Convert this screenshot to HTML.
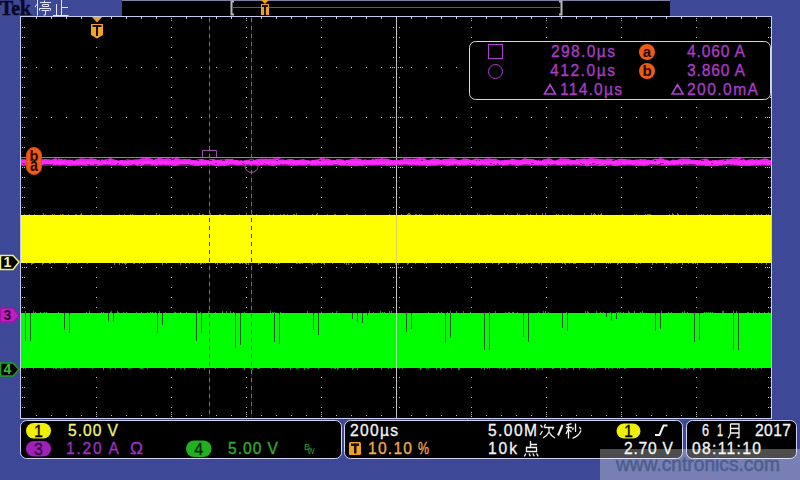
<!DOCTYPE html>
<html><head><meta charset="utf-8"><style>
html,body{margin:0;padding:0;background:#3D4896;width:800px;height:480px;overflow:hidden}
svg{display:block}
</style></head><body>
<svg width="800" height="480" viewBox="0 0 800 480" font-family="Liberation Sans, sans-serif">
<rect x="0" y="0" width="800" height="480" fill="#3D4896"/>
<rect x="122" y="0" width="548" height="1" fill="#7E80A8"/>
<rect x="122" y="1" width="548" height="15" fill="#000"/>
<rect x="233" y="7" width="327" height="1" fill="#8C3C84"/>
<path d="M234 1.5H231.5V14.5H234" fill="none" stroke="#B8B8B8" stroke-width="2"/>
<path d="M559 1.5H561.5V14.5H559" fill="none" stroke="#B8B8B8" stroke-width="2"/>
<path d="M261 0H269L265 4Z" fill="#F0A020"/>
<rect x="261" y="4" width="8" height="11" fill="#F0A020"/>
<rect x="262" y="5" width="6" height="2" fill="#1A1000"/>
<rect x="264" y="5" width="2" height="10" fill="#1A1000"/>
<text x="0" y="14.7" font-family="Liberation Serif" font-weight="bold" font-size="20" fill="#080826" stroke="#080826" stroke-width="0.5" textLength="31" lengthAdjust="spacingAndGlyphs">Tek</text>
<path d="M37.5 0V15.5 M38 3L35 7 M44.5 0.5V2 M40 2.5H51 M42.5 4.5H48.5V6.5H42.5Z M39.5 10.5V8.5H50.5V10.5 M41.5 10.5H49.5 M45.5 10.5V15H43.5 M61.5 0V15 M61.5 7.5H68 M56.5 4V15 M53 15.5H68.5" fill="none" stroke="#E4E6FF" stroke-width="1"/>
<rect x="21" y="17" width="750" height="401" fill="#000"/>
<rect x="20" y="16" width="752" height="1" fill="#C4CCF4"/>
<rect x="20" y="418" width="752" height="1" fill="#C4CCF4"/>
<rect x="20" y="16" width="1" height="403" fill="#C4CCF4"/>
<rect x="771" y="16" width="1" height="403" fill="#C4CCF4"/>
<path d="M36 67h1v1h-1zM51 67h1v1h-1zM66 67h1v1h-1zM81 67h1v1h-1zM96 67h1v1h-1zM111 67h1v1h-1zM126 67h1v1h-1zM141 67h1v1h-1zM156 67h1v1h-1zM171 67h1v1h-1zM186 67h1v1h-1zM201 67h1v1h-1zM216 67h1v1h-1zM231 67h1v1h-1zM246 67h1v1h-1zM261 67h1v1h-1zM276 67h1v1h-1zM291 67h1v1h-1zM306 67h1v1h-1zM321 67h1v1h-1zM336 67h1v1h-1zM351 67h1v1h-1zM366 67h1v1h-1zM381 67h1v1h-1zM396 67h1v1h-1zM411 67h1v1h-1zM426 67h1v1h-1zM441 67h1v1h-1zM456 67h1v1h-1zM471 67h1v1h-1zM486 67h1v1h-1zM501 67h1v1h-1zM516 67h1v1h-1zM531 67h1v1h-1zM546 67h1v1h-1zM561 67h1v1h-1zM576 67h1v1h-1zM591 67h1v1h-1zM606 67h1v1h-1zM621 67h1v1h-1zM636 67h1v1h-1zM651 67h1v1h-1zM666 67h1v1h-1zM681 67h1v1h-1zM696 67h1v1h-1zM711 67h1v1h-1zM726 67h1v1h-1zM741 67h1v1h-1zM756 67h1v1h-1zM36 117h1v1h-1zM51 117h1v1h-1zM66 117h1v1h-1zM81 117h1v1h-1zM96 117h1v1h-1zM111 117h1v1h-1zM126 117h1v1h-1zM141 117h1v1h-1zM156 117h1v1h-1zM171 117h1v1h-1zM186 117h1v1h-1zM201 117h1v1h-1zM216 117h1v1h-1zM231 117h1v1h-1zM246 117h1v1h-1zM261 117h1v1h-1zM276 117h1v1h-1zM291 117h1v1h-1zM306 117h1v1h-1zM321 117h1v1h-1zM336 117h1v1h-1zM351 117h1v1h-1zM366 117h1v1h-1zM381 117h1v1h-1zM396 117h1v1h-1zM411 117h1v1h-1zM426 117h1v1h-1zM441 117h1v1h-1zM456 117h1v1h-1zM471 117h1v1h-1zM486 117h1v1h-1zM501 117h1v1h-1zM516 117h1v1h-1zM531 117h1v1h-1zM546 117h1v1h-1zM561 117h1v1h-1zM576 117h1v1h-1zM591 117h1v1h-1zM606 117h1v1h-1zM621 117h1v1h-1zM636 117h1v1h-1zM651 117h1v1h-1zM666 117h1v1h-1zM681 117h1v1h-1zM696 117h1v1h-1zM711 117h1v1h-1zM726 117h1v1h-1zM741 117h1v1h-1zM756 117h1v1h-1zM36 167h1v1h-1zM51 167h1v1h-1zM66 167h1v1h-1zM81 167h1v1h-1zM96 167h1v1h-1zM111 167h1v1h-1zM126 167h1v1h-1zM141 167h1v1h-1zM156 167h1v1h-1zM171 167h1v1h-1zM186 167h1v1h-1zM201 167h1v1h-1zM216 167h1v1h-1zM231 167h1v1h-1zM246 167h1v1h-1zM261 167h1v1h-1zM276 167h1v1h-1zM291 167h1v1h-1zM306 167h1v1h-1zM321 167h1v1h-1zM336 167h1v1h-1zM351 167h1v1h-1zM366 167h1v1h-1zM381 167h1v1h-1zM396 167h1v1h-1zM411 167h1v1h-1zM426 167h1v1h-1zM441 167h1v1h-1zM456 167h1v1h-1zM471 167h1v1h-1zM486 167h1v1h-1zM501 167h1v1h-1zM516 167h1v1h-1zM531 167h1v1h-1zM546 167h1v1h-1zM561 167h1v1h-1zM576 167h1v1h-1zM591 167h1v1h-1zM606 167h1v1h-1zM621 167h1v1h-1zM636 167h1v1h-1zM651 167h1v1h-1zM666 167h1v1h-1zM681 167h1v1h-1zM696 167h1v1h-1zM711 167h1v1h-1zM726 167h1v1h-1zM741 167h1v1h-1zM756 167h1v1h-1zM36 217h1v1h-1zM51 217h1v1h-1zM66 217h1v1h-1zM81 217h1v1h-1zM96 217h1v1h-1zM111 217h1v1h-1zM126 217h1v1h-1zM141 217h1v1h-1zM156 217h1v1h-1zM171 217h1v1h-1zM186 217h1v1h-1zM201 217h1v1h-1zM216 217h1v1h-1zM231 217h1v1h-1zM246 217h1v1h-1zM261 217h1v1h-1zM276 217h1v1h-1zM291 217h1v1h-1zM306 217h1v1h-1zM321 217h1v1h-1zM336 217h1v1h-1zM351 217h1v1h-1zM366 217h1v1h-1zM381 217h1v1h-1zM396 217h1v1h-1zM411 217h1v1h-1zM426 217h1v1h-1zM441 217h1v1h-1zM456 217h1v1h-1zM471 217h1v1h-1zM486 217h1v1h-1zM501 217h1v1h-1zM516 217h1v1h-1zM531 217h1v1h-1zM546 217h1v1h-1zM561 217h1v1h-1zM576 217h1v1h-1zM591 217h1v1h-1zM606 217h1v1h-1zM621 217h1v1h-1zM636 217h1v1h-1zM651 217h1v1h-1zM666 217h1v1h-1zM681 217h1v1h-1zM696 217h1v1h-1zM711 217h1v1h-1zM726 217h1v1h-1zM741 217h1v1h-1zM756 217h1v1h-1zM36 267h1v1h-1zM51 267h1v1h-1zM66 267h1v1h-1zM81 267h1v1h-1zM96 267h1v1h-1zM111 267h1v1h-1zM126 267h1v1h-1zM141 267h1v1h-1zM156 267h1v1h-1zM171 267h1v1h-1zM186 267h1v1h-1zM201 267h1v1h-1zM216 267h1v1h-1zM231 267h1v1h-1zM246 267h1v1h-1zM261 267h1v1h-1zM276 267h1v1h-1zM291 267h1v1h-1zM306 267h1v1h-1zM321 267h1v1h-1zM336 267h1v1h-1zM351 267h1v1h-1zM366 267h1v1h-1zM381 267h1v1h-1zM396 267h1v1h-1zM411 267h1v1h-1zM426 267h1v1h-1zM441 267h1v1h-1zM456 267h1v1h-1zM471 267h1v1h-1zM486 267h1v1h-1zM501 267h1v1h-1zM516 267h1v1h-1zM531 267h1v1h-1zM546 267h1v1h-1zM561 267h1v1h-1zM576 267h1v1h-1zM591 267h1v1h-1zM606 267h1v1h-1zM621 267h1v1h-1zM636 267h1v1h-1zM651 267h1v1h-1zM666 267h1v1h-1zM681 267h1v1h-1zM696 267h1v1h-1zM711 267h1v1h-1zM726 267h1v1h-1zM741 267h1v1h-1zM756 267h1v1h-1zM36 317h1v1h-1zM51 317h1v1h-1zM66 317h1v1h-1zM81 317h1v1h-1zM96 317h1v1h-1zM111 317h1v1h-1zM126 317h1v1h-1zM141 317h1v1h-1zM156 317h1v1h-1zM171 317h1v1h-1zM186 317h1v1h-1zM201 317h1v1h-1zM216 317h1v1h-1zM231 317h1v1h-1zM246 317h1v1h-1zM261 317h1v1h-1zM276 317h1v1h-1zM291 317h1v1h-1zM306 317h1v1h-1zM321 317h1v1h-1zM336 317h1v1h-1zM351 317h1v1h-1zM366 317h1v1h-1zM381 317h1v1h-1zM396 317h1v1h-1zM411 317h1v1h-1zM426 317h1v1h-1zM441 317h1v1h-1zM456 317h1v1h-1zM471 317h1v1h-1zM486 317h1v1h-1zM501 317h1v1h-1zM516 317h1v1h-1zM531 317h1v1h-1zM546 317h1v1h-1zM561 317h1v1h-1zM576 317h1v1h-1zM591 317h1v1h-1zM606 317h1v1h-1zM621 317h1v1h-1zM636 317h1v1h-1zM651 317h1v1h-1zM666 317h1v1h-1zM681 317h1v1h-1zM696 317h1v1h-1zM711 317h1v1h-1zM726 317h1v1h-1zM741 317h1v1h-1zM756 317h1v1h-1zM36 367h1v1h-1zM51 367h1v1h-1zM66 367h1v1h-1zM81 367h1v1h-1zM96 367h1v1h-1zM111 367h1v1h-1zM126 367h1v1h-1zM141 367h1v1h-1zM156 367h1v1h-1zM171 367h1v1h-1zM186 367h1v1h-1zM201 367h1v1h-1zM216 367h1v1h-1zM231 367h1v1h-1zM246 367h1v1h-1zM261 367h1v1h-1zM276 367h1v1h-1zM291 367h1v1h-1zM306 367h1v1h-1zM321 367h1v1h-1zM336 367h1v1h-1zM351 367h1v1h-1zM366 367h1v1h-1zM381 367h1v1h-1zM396 367h1v1h-1zM411 367h1v1h-1zM426 367h1v1h-1zM441 367h1v1h-1zM456 367h1v1h-1zM471 367h1v1h-1zM486 367h1v1h-1zM501 367h1v1h-1zM516 367h1v1h-1zM531 367h1v1h-1zM546 367h1v1h-1zM561 367h1v1h-1zM576 367h1v1h-1zM591 367h1v1h-1zM606 367h1v1h-1zM621 367h1v1h-1zM636 367h1v1h-1zM651 367h1v1h-1zM666 367h1v1h-1zM681 367h1v1h-1zM696 367h1v1h-1zM711 367h1v1h-1zM726 367h1v1h-1zM741 367h1v1h-1zM756 367h1v1h-1zM96 27h1v1h-1zM96 37h1v1h-1zM96 47h1v1h-1zM96 57h1v1h-1zM96 77h1v1h-1zM96 87h1v1h-1zM96 97h1v1h-1zM96 107h1v1h-1zM96 127h1v1h-1zM96 137h1v1h-1zM96 147h1v1h-1zM96 157h1v1h-1zM96 177h1v1h-1zM96 187h1v1h-1zM96 197h1v1h-1zM96 207h1v1h-1zM96 227h1v1h-1zM96 237h1v1h-1zM96 247h1v1h-1zM96 257h1v1h-1zM96 277h1v1h-1zM96 287h1v1h-1zM96 297h1v1h-1zM96 307h1v1h-1zM96 327h1v1h-1zM96 337h1v1h-1zM96 347h1v1h-1zM96 357h1v1h-1zM96 377h1v1h-1zM96 387h1v1h-1zM96 397h1v1h-1zM96 407h1v1h-1zM171 27h1v1h-1zM171 37h1v1h-1zM171 47h1v1h-1zM171 57h1v1h-1zM171 77h1v1h-1zM171 87h1v1h-1zM171 97h1v1h-1zM171 107h1v1h-1zM171 127h1v1h-1zM171 137h1v1h-1zM171 147h1v1h-1zM171 157h1v1h-1zM171 177h1v1h-1zM171 187h1v1h-1zM171 197h1v1h-1zM171 207h1v1h-1zM171 227h1v1h-1zM171 237h1v1h-1zM171 247h1v1h-1zM171 257h1v1h-1zM171 277h1v1h-1zM171 287h1v1h-1zM171 297h1v1h-1zM171 307h1v1h-1zM171 327h1v1h-1zM171 337h1v1h-1zM171 347h1v1h-1zM171 357h1v1h-1zM171 377h1v1h-1zM171 387h1v1h-1zM171 397h1v1h-1zM171 407h1v1h-1zM246 27h1v1h-1zM246 37h1v1h-1zM246 47h1v1h-1zM246 57h1v1h-1zM246 77h1v1h-1zM246 87h1v1h-1zM246 97h1v1h-1zM246 107h1v1h-1zM246 127h1v1h-1zM246 137h1v1h-1zM246 147h1v1h-1zM246 157h1v1h-1zM246 177h1v1h-1zM246 187h1v1h-1zM246 197h1v1h-1zM246 207h1v1h-1zM246 227h1v1h-1zM246 237h1v1h-1zM246 247h1v1h-1zM246 257h1v1h-1zM246 277h1v1h-1zM246 287h1v1h-1zM246 297h1v1h-1zM246 307h1v1h-1zM246 327h1v1h-1zM246 337h1v1h-1zM246 347h1v1h-1zM246 357h1v1h-1zM246 377h1v1h-1zM246 387h1v1h-1zM246 397h1v1h-1zM246 407h1v1h-1zM321 27h1v1h-1zM321 37h1v1h-1zM321 47h1v1h-1zM321 57h1v1h-1zM321 77h1v1h-1zM321 87h1v1h-1zM321 97h1v1h-1zM321 107h1v1h-1zM321 127h1v1h-1zM321 137h1v1h-1zM321 147h1v1h-1zM321 157h1v1h-1zM321 177h1v1h-1zM321 187h1v1h-1zM321 197h1v1h-1zM321 207h1v1h-1zM321 227h1v1h-1zM321 237h1v1h-1zM321 247h1v1h-1zM321 257h1v1h-1zM321 277h1v1h-1zM321 287h1v1h-1zM321 297h1v1h-1zM321 307h1v1h-1zM321 327h1v1h-1zM321 337h1v1h-1zM321 347h1v1h-1zM321 357h1v1h-1zM321 377h1v1h-1zM321 387h1v1h-1zM321 397h1v1h-1zM321 407h1v1h-1zM396 27h1v1h-1zM396 37h1v1h-1zM396 47h1v1h-1zM396 57h1v1h-1zM396 77h1v1h-1zM396 87h1v1h-1zM396 97h1v1h-1zM396 107h1v1h-1zM396 127h1v1h-1zM396 137h1v1h-1zM396 147h1v1h-1zM396 157h1v1h-1zM396 177h1v1h-1zM396 187h1v1h-1zM396 197h1v1h-1zM396 207h1v1h-1zM396 227h1v1h-1zM396 237h1v1h-1zM396 247h1v1h-1zM396 257h1v1h-1zM396 277h1v1h-1zM396 287h1v1h-1zM396 297h1v1h-1zM396 307h1v1h-1zM396 327h1v1h-1zM396 337h1v1h-1zM396 347h1v1h-1zM396 357h1v1h-1zM396 377h1v1h-1zM396 387h1v1h-1zM396 397h1v1h-1zM396 407h1v1h-1zM471 27h1v1h-1zM471 37h1v1h-1zM471 47h1v1h-1zM471 57h1v1h-1zM471 77h1v1h-1zM471 87h1v1h-1zM471 97h1v1h-1zM471 107h1v1h-1zM471 127h1v1h-1zM471 137h1v1h-1zM471 147h1v1h-1zM471 157h1v1h-1zM471 177h1v1h-1zM471 187h1v1h-1zM471 197h1v1h-1zM471 207h1v1h-1zM471 227h1v1h-1zM471 237h1v1h-1zM471 247h1v1h-1zM471 257h1v1h-1zM471 277h1v1h-1zM471 287h1v1h-1zM471 297h1v1h-1zM471 307h1v1h-1zM471 327h1v1h-1zM471 337h1v1h-1zM471 347h1v1h-1zM471 357h1v1h-1zM471 377h1v1h-1zM471 387h1v1h-1zM471 397h1v1h-1zM471 407h1v1h-1zM546 27h1v1h-1zM546 37h1v1h-1zM546 47h1v1h-1zM546 57h1v1h-1zM546 77h1v1h-1zM546 87h1v1h-1zM546 97h1v1h-1zM546 107h1v1h-1zM546 127h1v1h-1zM546 137h1v1h-1zM546 147h1v1h-1zM546 157h1v1h-1zM546 177h1v1h-1zM546 187h1v1h-1zM546 197h1v1h-1zM546 207h1v1h-1zM546 227h1v1h-1zM546 237h1v1h-1zM546 247h1v1h-1zM546 257h1v1h-1zM546 277h1v1h-1zM546 287h1v1h-1zM546 297h1v1h-1zM546 307h1v1h-1zM546 327h1v1h-1zM546 337h1v1h-1zM546 347h1v1h-1zM546 357h1v1h-1zM546 377h1v1h-1zM546 387h1v1h-1zM546 397h1v1h-1zM546 407h1v1h-1zM621 27h1v1h-1zM621 37h1v1h-1zM621 47h1v1h-1zM621 57h1v1h-1zM621 77h1v1h-1zM621 87h1v1h-1zM621 97h1v1h-1zM621 107h1v1h-1zM621 127h1v1h-1zM621 137h1v1h-1zM621 147h1v1h-1zM621 157h1v1h-1zM621 177h1v1h-1zM621 187h1v1h-1zM621 197h1v1h-1zM621 207h1v1h-1zM621 227h1v1h-1zM621 237h1v1h-1zM621 247h1v1h-1zM621 257h1v1h-1zM621 277h1v1h-1zM621 287h1v1h-1zM621 297h1v1h-1zM621 307h1v1h-1zM621 327h1v1h-1zM621 337h1v1h-1zM621 347h1v1h-1zM621 357h1v1h-1zM621 377h1v1h-1zM621 387h1v1h-1zM621 397h1v1h-1zM621 407h1v1h-1zM696 27h1v1h-1zM696 37h1v1h-1zM696 47h1v1h-1zM696 57h1v1h-1zM696 77h1v1h-1zM696 87h1v1h-1zM696 97h1v1h-1zM696 107h1v1h-1zM696 127h1v1h-1zM696 137h1v1h-1zM696 147h1v1h-1zM696 157h1v1h-1zM696 177h1v1h-1zM696 187h1v1h-1zM696 197h1v1h-1zM696 207h1v1h-1zM696 227h1v1h-1zM696 237h1v1h-1zM696 247h1v1h-1zM696 257h1v1h-1zM696 277h1v1h-1zM696 287h1v1h-1zM696 297h1v1h-1zM696 307h1v1h-1zM696 327h1v1h-1zM696 337h1v1h-1zM696 347h1v1h-1zM696 357h1v1h-1zM696 377h1v1h-1zM696 387h1v1h-1zM696 397h1v1h-1zM696 407h1v1h-1zM36 17h1v1h-1zM36 18h1v1h-1zM36 415h1v1h-1zM51 17h1v1h-1zM51 18h1v1h-1zM51 415h1v1h-1zM66 17h1v1h-1zM66 18h1v1h-1zM66 415h1v1h-1zM81 17h1v1h-1zM81 18h1v1h-1zM81 415h1v1h-1zM96 18h1v1h-1zM96 20h1v1h-1zM96 412h1v1h-1zM96 414h1v1h-1zM96 416h1v1h-1zM111 17h1v1h-1zM111 18h1v1h-1zM111 415h1v1h-1zM126 17h1v1h-1zM126 18h1v1h-1zM126 415h1v1h-1zM141 17h1v1h-1zM141 18h1v1h-1zM141 415h1v1h-1zM156 17h1v1h-1zM156 18h1v1h-1zM156 415h1v1h-1zM171 18h1v1h-1zM171 20h1v1h-1zM171 412h1v1h-1zM171 414h1v1h-1zM171 416h1v1h-1zM186 17h1v1h-1zM186 18h1v1h-1zM186 415h1v1h-1zM201 17h1v1h-1zM201 18h1v1h-1zM201 415h1v1h-1zM216 17h1v1h-1zM216 18h1v1h-1zM216 415h1v1h-1zM231 17h1v1h-1zM231 18h1v1h-1zM231 415h1v1h-1zM246 18h1v1h-1zM246 20h1v1h-1zM246 412h1v1h-1zM246 414h1v1h-1zM246 416h1v1h-1zM261 17h1v1h-1zM261 18h1v1h-1zM261 415h1v1h-1zM276 17h1v1h-1zM276 18h1v1h-1zM276 415h1v1h-1zM291 17h1v1h-1zM291 18h1v1h-1zM291 415h1v1h-1zM306 17h1v1h-1zM306 18h1v1h-1zM306 415h1v1h-1zM321 18h1v1h-1zM321 20h1v1h-1zM321 412h1v1h-1zM321 414h1v1h-1zM321 416h1v1h-1zM336 17h1v1h-1zM336 18h1v1h-1zM336 415h1v1h-1zM351 17h1v1h-1zM351 18h1v1h-1zM351 415h1v1h-1zM366 17h1v1h-1zM366 18h1v1h-1zM366 415h1v1h-1zM381 17h1v1h-1zM381 18h1v1h-1zM381 415h1v1h-1zM396 18h1v1h-1zM396 20h1v1h-1zM396 412h1v1h-1zM396 414h1v1h-1zM396 416h1v1h-1zM411 17h1v1h-1zM411 18h1v1h-1zM411 415h1v1h-1zM426 17h1v1h-1zM426 18h1v1h-1zM426 415h1v1h-1zM441 17h1v1h-1zM441 18h1v1h-1zM441 415h1v1h-1zM456 17h1v1h-1zM456 18h1v1h-1zM456 415h1v1h-1zM471 18h1v1h-1zM471 20h1v1h-1zM471 412h1v1h-1zM471 414h1v1h-1zM471 416h1v1h-1zM486 17h1v1h-1zM486 18h1v1h-1zM486 415h1v1h-1zM501 17h1v1h-1zM501 18h1v1h-1zM501 415h1v1h-1zM516 17h1v1h-1zM516 18h1v1h-1zM516 415h1v1h-1zM531 17h1v1h-1zM531 18h1v1h-1zM531 415h1v1h-1zM546 18h1v1h-1zM546 20h1v1h-1zM546 412h1v1h-1zM546 414h1v1h-1zM546 416h1v1h-1zM561 17h1v1h-1zM561 18h1v1h-1zM561 415h1v1h-1zM576 17h1v1h-1zM576 18h1v1h-1zM576 415h1v1h-1zM591 17h1v1h-1zM591 18h1v1h-1zM591 415h1v1h-1zM606 17h1v1h-1zM606 18h1v1h-1zM606 415h1v1h-1zM621 18h1v1h-1zM621 20h1v1h-1zM621 412h1v1h-1zM621 414h1v1h-1zM621 416h1v1h-1zM636 17h1v1h-1zM636 18h1v1h-1zM636 415h1v1h-1zM651 17h1v1h-1zM651 18h1v1h-1zM651 415h1v1h-1zM666 17h1v1h-1zM666 18h1v1h-1zM666 415h1v1h-1zM681 17h1v1h-1zM681 18h1v1h-1zM681 415h1v1h-1zM696 18h1v1h-1zM696 20h1v1h-1zM696 412h1v1h-1zM696 414h1v1h-1zM696 416h1v1h-1zM711 17h1v1h-1zM711 18h1v1h-1zM711 415h1v1h-1zM726 17h1v1h-1zM726 18h1v1h-1zM726 415h1v1h-1zM741 17h1v1h-1zM741 18h1v1h-1zM741 415h1v1h-1zM756 17h1v1h-1zM756 18h1v1h-1zM756 415h1v1h-1zM22 27h1v1h-1zM24 27h1v1h-1zM768 27h1v1h-1zM770 27h1v1h-1zM22 37h1v1h-1zM24 37h1v1h-1zM768 37h1v1h-1zM770 37h1v1h-1zM22 47h1v1h-1zM24 47h1v1h-1zM768 47h1v1h-1zM770 47h1v1h-1zM22 57h1v1h-1zM24 57h1v1h-1zM768 57h1v1h-1zM770 57h1v1h-1zM22 67h1v1h-1zM24 67h1v1h-1zM26 67h1v1h-1zM765 67h1v1h-1zM767 67h1v1h-1zM769 67h1v1h-1zM22 77h1v1h-1zM24 77h1v1h-1zM768 77h1v1h-1zM770 77h1v1h-1zM22 87h1v1h-1zM24 87h1v1h-1zM768 87h1v1h-1zM770 87h1v1h-1zM22 97h1v1h-1zM24 97h1v1h-1zM768 97h1v1h-1zM770 97h1v1h-1zM22 107h1v1h-1zM24 107h1v1h-1zM768 107h1v1h-1zM770 107h1v1h-1zM22 117h1v1h-1zM24 117h1v1h-1zM26 117h1v1h-1zM765 117h1v1h-1zM767 117h1v1h-1zM769 117h1v1h-1zM22 127h1v1h-1zM24 127h1v1h-1zM768 127h1v1h-1zM770 127h1v1h-1zM22 137h1v1h-1zM24 137h1v1h-1zM768 137h1v1h-1zM770 137h1v1h-1zM22 147h1v1h-1zM24 147h1v1h-1zM768 147h1v1h-1zM770 147h1v1h-1zM22 157h1v1h-1zM24 157h1v1h-1zM768 157h1v1h-1zM770 157h1v1h-1zM22 167h1v1h-1zM24 167h1v1h-1zM26 167h1v1h-1zM765 167h1v1h-1zM767 167h1v1h-1zM769 167h1v1h-1zM22 177h1v1h-1zM24 177h1v1h-1zM768 177h1v1h-1zM770 177h1v1h-1zM22 187h1v1h-1zM24 187h1v1h-1zM768 187h1v1h-1zM770 187h1v1h-1zM22 197h1v1h-1zM24 197h1v1h-1zM768 197h1v1h-1zM770 197h1v1h-1zM22 207h1v1h-1zM24 207h1v1h-1zM768 207h1v1h-1zM770 207h1v1h-1zM22 217h1v1h-1zM24 217h1v1h-1zM26 217h1v1h-1zM765 217h1v1h-1zM767 217h1v1h-1zM769 217h1v1h-1zM22 227h1v1h-1zM24 227h1v1h-1zM768 227h1v1h-1zM770 227h1v1h-1zM22 237h1v1h-1zM24 237h1v1h-1zM768 237h1v1h-1zM770 237h1v1h-1zM22 247h1v1h-1zM24 247h1v1h-1zM768 247h1v1h-1zM770 247h1v1h-1zM22 257h1v1h-1zM24 257h1v1h-1zM768 257h1v1h-1zM770 257h1v1h-1zM22 267h1v1h-1zM24 267h1v1h-1zM26 267h1v1h-1zM765 267h1v1h-1zM767 267h1v1h-1zM769 267h1v1h-1zM22 277h1v1h-1zM24 277h1v1h-1zM768 277h1v1h-1zM770 277h1v1h-1zM22 287h1v1h-1zM24 287h1v1h-1zM768 287h1v1h-1zM770 287h1v1h-1zM22 297h1v1h-1zM24 297h1v1h-1zM768 297h1v1h-1zM770 297h1v1h-1zM22 307h1v1h-1zM24 307h1v1h-1zM768 307h1v1h-1zM770 307h1v1h-1zM22 317h1v1h-1zM24 317h1v1h-1zM26 317h1v1h-1zM765 317h1v1h-1zM767 317h1v1h-1zM769 317h1v1h-1zM22 327h1v1h-1zM24 327h1v1h-1zM768 327h1v1h-1zM770 327h1v1h-1zM22 337h1v1h-1zM24 337h1v1h-1zM768 337h1v1h-1zM770 337h1v1h-1zM22 347h1v1h-1zM24 347h1v1h-1zM768 347h1v1h-1zM770 347h1v1h-1zM22 357h1v1h-1zM24 357h1v1h-1zM768 357h1v1h-1zM770 357h1v1h-1zM22 367h1v1h-1zM24 367h1v1h-1zM26 367h1v1h-1zM765 367h1v1h-1zM767 367h1v1h-1zM769 367h1v1h-1zM22 377h1v1h-1zM24 377h1v1h-1zM768 377h1v1h-1zM770 377h1v1h-1zM22 387h1v1h-1zM24 387h1v1h-1zM768 387h1v1h-1zM770 387h1v1h-1zM22 397h1v1h-1zM24 397h1v1h-1zM768 397h1v1h-1zM770 397h1v1h-1zM22 407h1v1h-1zM24 407h1v1h-1zM768 407h1v1h-1zM770 407h1v1h-1zM393 27h1v1h-1zM399 27h1v1h-1zM393 37h1v1h-1zM399 37h1v1h-1zM393 47h1v1h-1zM399 47h1v1h-1zM393 57h1v1h-1zM399 57h1v1h-1zM390 67h1v1h-1zM392 67h1v1h-1zM394 67h1v1h-1zM398 67h1v1h-1zM400 67h1v1h-1zM402 67h1v1h-1zM393 77h1v1h-1zM399 77h1v1h-1zM393 87h1v1h-1zM399 87h1v1h-1zM393 97h1v1h-1zM399 97h1v1h-1zM393 107h1v1h-1zM399 107h1v1h-1zM390 117h1v1h-1zM392 117h1v1h-1zM394 117h1v1h-1zM398 117h1v1h-1zM400 117h1v1h-1zM402 117h1v1h-1zM393 127h1v1h-1zM399 127h1v1h-1zM393 137h1v1h-1zM399 137h1v1h-1zM393 147h1v1h-1zM399 147h1v1h-1zM393 157h1v1h-1zM399 157h1v1h-1zM390 167h1v1h-1zM392 167h1v1h-1zM394 167h1v1h-1zM398 167h1v1h-1zM400 167h1v1h-1zM402 167h1v1h-1zM393 177h1v1h-1zM399 177h1v1h-1zM393 187h1v1h-1zM399 187h1v1h-1zM393 197h1v1h-1zM399 197h1v1h-1zM393 207h1v1h-1zM399 207h1v1h-1zM390 217h1v1h-1zM392 217h1v1h-1zM394 217h1v1h-1zM398 217h1v1h-1zM400 217h1v1h-1zM402 217h1v1h-1zM393 227h1v1h-1zM399 227h1v1h-1zM393 237h1v1h-1zM399 237h1v1h-1zM393 247h1v1h-1zM399 247h1v1h-1zM393 257h1v1h-1zM399 257h1v1h-1zM390 267h1v1h-1zM392 267h1v1h-1zM394 267h1v1h-1zM398 267h1v1h-1zM400 267h1v1h-1zM402 267h1v1h-1zM393 277h1v1h-1zM399 277h1v1h-1zM393 287h1v1h-1zM399 287h1v1h-1zM393 297h1v1h-1zM399 297h1v1h-1zM393 307h1v1h-1zM399 307h1v1h-1zM390 317h1v1h-1zM392 317h1v1h-1zM394 317h1v1h-1zM398 317h1v1h-1zM400 317h1v1h-1zM402 317h1v1h-1zM393 327h1v1h-1zM399 327h1v1h-1zM393 337h1v1h-1zM399 337h1v1h-1zM393 347h1v1h-1zM399 347h1v1h-1zM393 357h1v1h-1zM399 357h1v1h-1zM390 367h1v1h-1zM392 367h1v1h-1zM394 367h1v1h-1zM398 367h1v1h-1zM400 367h1v1h-1zM402 367h1v1h-1zM393 377h1v1h-1zM399 377h1v1h-1zM393 387h1v1h-1zM399 387h1v1h-1zM393 397h1v1h-1zM399 397h1v1h-1zM393 407h1v1h-1zM399 407h1v1h-1z" fill="#C8C8C8"/>
<rect x="396" y="17" width="1" height="401" fill="#C0C0C0"/>
<rect x="21" y="215" width="750" height="48" fill="#FFFF00"/>
<rect x="21" y="215" width="750" height="1" fill="#F4F070"/>
<rect x="21" y="313" width="750" height="55" fill="#00FF00"/>
<path d="M24 214h1v1h-1zM26 263h1v1h-1zM29 214h1v1h-1zM31 263h1v2h-1zM32 263h1v1h-1zM33 263h1v1h-1zM34 214h1v1h-1zM42 263h1v2h-1zM43 213h1v2h-1zM43 263h1v1h-1zM45 214h1v1h-1zM49 263h1v1h-1zM50 263h1v1h-1zM52 214h1v1h-1zM54 214h1v1h-1zM54 263h1v1h-1zM60 214h1v1h-1zM62 214h1v1h-1zM63 214h1v1h-1zM67 263h1v2h-1zM68 214h1v1h-1zM68 263h1v1h-1zM70 263h1v1h-1zM75 214h1v1h-1zM76 214h1v1h-1zM77 263h1v1h-1zM80 214h1v1h-1zM81 213h1v2h-1zM87 263h1v1h-1zM91 214h1v1h-1zM101 214h1v1h-1zM114 263h1v2h-1zM119 214h1v1h-1zM119 263h1v2h-1zM122 263h1v1h-1zM124 214h1v1h-1zM124 263h1v1h-1zM125 263h1v2h-1zM126 263h1v1h-1zM130 214h1v1h-1zM132 214h1v1h-1zM133 263h1v1h-1zM134 263h1v1h-1zM139 263h1v1h-1zM143 263h1v1h-1zM144 214h1v1h-1zM145 263h1v1h-1zM156 213h1v2h-1zM159 214h1v1h-1zM162 263h1v2h-1zM166 263h1v1h-1zM172 214h1v1h-1zM175 214h1v1h-1zM180 263h1v2h-1zM182 214h1v1h-1zM185 263h1v1h-1zM188 213h1v2h-1zM189 263h1v1h-1zM192 214h1v1h-1zM194 263h1v1h-1zM197 263h1v1h-1zM199 213h1v2h-1zM200 263h1v2h-1zM201 263h1v1h-1zM202 214h1v1h-1zM203 214h1v1h-1zM203 263h1v1h-1zM205 263h1v1h-1zM209 214h1v1h-1zM210 213h1v2h-1zM215 263h1v1h-1zM217 263h1v2h-1zM219 214h1v1h-1zM220 214h1v1h-1zM220 263h1v1h-1zM224 214h1v1h-1zM225 214h1v1h-1zM225 263h1v2h-1zM227 263h1v1h-1zM229 263h1v1h-1zM233 263h1v1h-1zM239 214h1v1h-1zM239 263h1v1h-1zM240 263h1v1h-1zM242 263h1v1h-1zM245 263h1v1h-1zM246 213h1v2h-1zM246 263h1v2h-1zM248 263h1v2h-1zM252 214h1v1h-1zM256 214h1v1h-1zM258 263h1v2h-1zM259 263h1v1h-1zM260 263h1v1h-1zM268 263h1v1h-1zM269 214h1v1h-1zM270 263h1v1h-1zM273 214h1v1h-1zM273 263h1v1h-1zM275 263h1v1h-1zM276 263h1v1h-1zM277 263h1v1h-1zM279 263h1v1h-1zM280 214h1v1h-1zM283 214h1v1h-1zM284 214h1v1h-1zM287 214h1v1h-1zM293 214h1v1h-1zM294 214h1v1h-1zM296 213h1v2h-1zM296 263h1v1h-1zM297 263h1v1h-1zM299 263h1v1h-1zM300 263h1v1h-1zM302 263h1v1h-1zM311 263h1v1h-1zM312 214h1v1h-1zM312 263h1v2h-1zM314 263h1v1h-1zM316 214h1v1h-1zM316 263h1v1h-1zM317 213h1v2h-1zM321 263h1v1h-1zM323 263h1v1h-1zM324 263h1v2h-1zM327 214h1v1h-1zM332 263h1v1h-1zM334 214h1v1h-1zM335 214h1v1h-1zM344 263h1v1h-1zM346 214h1v1h-1zM346 263h1v2h-1zM347 214h1v1h-1zM348 263h1v2h-1zM352 263h1v1h-1zM355 263h1v1h-1zM364 263h1v1h-1zM365 214h1v1h-1zM369 263h1v1h-1zM377 263h1v1h-1zM378 263h1v2h-1zM381 263h1v1h-1zM389 214h1v1h-1zM395 263h1v2h-1zM396 214h1v1h-1zM396 263h1v1h-1zM398 263h1v2h-1zM401 214h1v1h-1zM407 214h1v1h-1zM407 263h1v2h-1zM408 213h1v2h-1zM408 263h1v1h-1zM409 213h1v2h-1zM410 214h1v1h-1zM415 214h1v1h-1zM415 263h1v1h-1zM416 214h1v1h-1zM419 214h1v1h-1zM421 214h1v1h-1zM424 263h1v1h-1zM426 263h1v1h-1zM434 214h1v1h-1zM436 214h1v1h-1zM437 214h1v1h-1zM440 214h1v1h-1zM441 263h1v1h-1zM443 214h1v1h-1zM445 263h1v1h-1zM448 214h1v1h-1zM450 263h1v1h-1zM454 263h1v1h-1zM455 214h1v1h-1zM460 213h1v2h-1zM465 263h1v1h-1zM467 214h1v1h-1zM469 263h1v1h-1zM471 263h1v1h-1zM473 263h1v1h-1zM477 213h1v2h-1zM479 214h1v1h-1zM479 263h1v1h-1zM485 263h1v1h-1zM487 214h1v1h-1zM490 214h1v1h-1zM491 214h1v1h-1zM492 263h1v1h-1zM498 263h1v2h-1zM499 263h1v1h-1zM504 213h1v2h-1zM507 214h1v1h-1zM507 263h1v1h-1zM508 263h1v1h-1zM516 263h1v2h-1zM517 213h1v2h-1zM517 263h1v1h-1zM519 214h1v1h-1zM519 263h1v1h-1zM521 263h1v1h-1zM522 263h1v1h-1zM525 263h1v1h-1zM526 214h1v1h-1zM527 214h1v1h-1zM527 263h1v1h-1zM530 214h1v1h-1zM531 263h1v1h-1zM533 263h1v1h-1zM536 213h1v2h-1zM538 263h1v1h-1zM539 263h1v1h-1zM541 263h1v2h-1zM542 213h1v2h-1zM545 213h1v2h-1zM550 263h1v1h-1zM554 263h1v1h-1zM556 214h1v1h-1zM558 214h1v1h-1zM562 214h1v1h-1zM562 263h1v1h-1zM564 263h1v1h-1zM565 263h1v2h-1zM568 214h1v1h-1zM569 263h1v1h-1zM571 214h1v1h-1zM573 263h1v1h-1zM574 263h1v1h-1zM575 263h1v1h-1zM584 213h1v2h-1zM584 263h1v1h-1zM591 213h1v2h-1zM593 214h1v1h-1zM594 213h1v2h-1zM594 263h1v2h-1zM595 214h1v1h-1zM598 214h1v1h-1zM600 214h1v1h-1zM601 213h1v2h-1zM606 263h1v1h-1zM608 263h1v1h-1zM610 263h1v1h-1zM617 263h1v2h-1zM618 263h1v1h-1zM620 263h1v1h-1zM622 214h1v1h-1zM627 263h1v1h-1zM634 214h1v1h-1zM635 263h1v1h-1zM636 214h1v1h-1zM636 263h1v1h-1zM637 263h1v1h-1zM640 263h1v1h-1zM645 214h1v1h-1zM647 214h1v1h-1zM648 214h1v1h-1zM649 214h1v1h-1zM650 214h1v1h-1zM652 263h1v2h-1zM656 263h1v1h-1zM664 263h1v2h-1zM669 214h1v1h-1zM670 263h1v1h-1zM671 263h1v1h-1zM672 213h1v2h-1zM673 214h1v1h-1zM673 263h1v1h-1zM676 263h1v1h-1zM677 213h1v2h-1zM677 263h1v1h-1zM678 214h1v1h-1zM682 263h1v2h-1zM686 214h1v1h-1zM688 263h1v1h-1zM692 263h1v1h-1zM693 263h1v1h-1zM695 263h1v1h-1zM697 263h1v2h-1zM699 214h1v1h-1zM701 214h1v1h-1zM703 214h1v1h-1zM704 263h1v1h-1zM707 214h1v1h-1zM710 214h1v1h-1zM717 263h1v1h-1zM722 263h1v1h-1zM723 214h1v1h-1zM724 263h1v1h-1zM725 214h1v1h-1zM727 214h1v1h-1zM734 214h1v1h-1zM738 263h1v1h-1zM746 214h1v1h-1zM753 214h1v1h-1zM755 214h1v1h-1zM758 214h1v1h-1zM758 263h1v1h-1zM761 214h1v1h-1zM761 263h1v1h-1zM766 214h1v1h-1zM766 263h1v2h-1zM768 214h1v1h-1z" fill="#F0F000" opacity="0.5"/>
<path d="M23 368h1v1h-1zM25 311h1v2h-1zM25 368h1v1h-1zM33 311h1v2h-1zM33 368h1v1h-1zM35 312h1v1h-1zM40 312h1v1h-1zM44 312h1v1h-1zM44 368h1v2h-1zM46 312h1v1h-1zM53 368h1v1h-1zM55 368h1v1h-1zM56 368h1v1h-1zM58 312h1v1h-1zM60 368h1v1h-1zM62 368h1v1h-1zM66 368h1v1h-1zM70 368h1v1h-1zM78 368h1v1h-1zM86 312h1v1h-1zM89 311h1v2h-1zM92 368h1v1h-1zM101 312h1v1h-1zM103 312h1v1h-1zM103 368h1v2h-1zM110 312h1v1h-1zM110 368h1v1h-1zM111 311h1v2h-1zM115 368h1v1h-1zM117 311h1v2h-1zM118 312h1v1h-1zM121 368h1v1h-1zM123 312h1v1h-1zM126 312h1v1h-1zM128 368h1v1h-1zM130 368h1v1h-1zM136 312h1v1h-1zM140 368h1v1h-1zM141 312h1v1h-1zM141 368h1v1h-1zM142 368h1v1h-1zM147 312h1v1h-1zM147 368h1v1h-1zM150 312h1v1h-1zM152 312h1v1h-1zM155 312h1v1h-1zM159 311h1v2h-1zM165 312h1v1h-1zM167 368h1v1h-1zM174 312h1v1h-1zM175 312h1v1h-1zM175 368h1v2h-1zM180 312h1v1h-1zM180 368h1v1h-1zM184 368h1v2h-1zM186 312h1v1h-1zM197 311h1v2h-1zM197 368h1v1h-1zM199 368h1v1h-1zM200 312h1v1h-1zM204 368h1v2h-1zM208 311h1v2h-1zM215 312h1v1h-1zM215 368h1v1h-1zM222 311h1v2h-1zM225 368h1v1h-1zM226 311h1v2h-1zM227 368h1v1h-1zM230 311h1v2h-1zM233 312h1v1h-1zM244 312h1v1h-1zM244 368h1v2h-1zM250 368h1v1h-1zM252 368h1v2h-1zM257 368h1v1h-1zM258 368h1v1h-1zM259 368h1v1h-1zM270 311h1v2h-1zM271 368h1v1h-1zM272 312h1v1h-1zM274 312h1v1h-1zM279 368h1v1h-1zM280 312h1v1h-1zM281 368h1v1h-1zM284 368h1v1h-1zM290 368h1v2h-1zM296 368h1v1h-1zM298 368h1v1h-1zM304 368h1v2h-1zM307 311h1v2h-1zM307 368h1v1h-1zM308 368h1v1h-1zM318 368h1v1h-1zM321 312h1v1h-1zM331 368h1v1h-1zM332 312h1v1h-1zM334 368h1v1h-1zM335 368h1v1h-1zM336 311h1v2h-1zM337 368h1v2h-1zM338 368h1v1h-1zM345 368h1v1h-1zM352 368h1v2h-1zM353 368h1v1h-1zM357 368h1v2h-1zM369 311h1v2h-1zM373 312h1v1h-1zM373 368h1v1h-1zM380 311h1v2h-1zM381 368h1v2h-1zM382 312h1v1h-1zM384 312h1v1h-1zM388 368h1v1h-1zM389 311h1v2h-1zM391 311h1v2h-1zM391 368h1v1h-1zM399 368h1v1h-1zM402 368h1v1h-1zM420 368h1v2h-1zM421 368h1v1h-1zM426 368h1v1h-1zM428 312h1v1h-1zM428 368h1v1h-1zM436 368h1v2h-1zM438 312h1v1h-1zM440 368h1v2h-1zM441 312h1v1h-1zM441 368h1v1h-1zM445 368h1v1h-1zM447 312h1v1h-1zM450 311h1v2h-1zM451 368h1v1h-1zM456 311h1v2h-1zM458 368h1v2h-1zM459 368h1v2h-1zM463 311h1v2h-1zM470 312h1v1h-1zM481 368h1v1h-1zM484 368h1v2h-1zM487 368h1v1h-1zM489 312h1v1h-1zM489 368h1v1h-1zM495 311h1v2h-1zM499 368h1v1h-1zM502 368h1v1h-1zM505 312h1v1h-1zM506 368h1v2h-1zM507 368h1v1h-1zM508 312h1v1h-1zM509 312h1v1h-1zM510 368h1v1h-1zM512 312h1v1h-1zM513 312h1v1h-1zM517 312h1v1h-1zM520 368h1v2h-1zM525 368h1v2h-1zM528 368h1v1h-1zM536 368h1v2h-1zM538 312h1v1h-1zM538 368h1v1h-1zM542 368h1v2h-1zM543 311h1v2h-1zM545 311h1v2h-1zM548 312h1v1h-1zM552 368h1v1h-1zM553 368h1v1h-1zM560 368h1v2h-1zM566 312h1v1h-1zM566 368h1v1h-1zM567 368h1v1h-1zM573 368h1v2h-1zM579 368h1v2h-1zM585 311h1v2h-1zM587 311h1v2h-1zM587 368h1v1h-1zM588 312h1v1h-1zM590 368h1v1h-1zM592 368h1v1h-1zM595 368h1v1h-1zM596 311h1v2h-1zM600 312h1v1h-1zM603 312h1v1h-1zM605 368h1v2h-1zM608 368h1v1h-1zM610 312h1v1h-1zM612 368h1v1h-1zM616 312h1v1h-1zM617 368h1v1h-1zM618 312h1v1h-1zM619 368h1v1h-1zM620 312h1v1h-1zM623 312h1v1h-1zM624 368h1v1h-1zM625 368h1v1h-1zM628 311h1v2h-1zM629 312h1v1h-1zM634 311h1v2h-1zM640 312h1v1h-1zM642 311h1v2h-1zM647 368h1v1h-1zM653 368h1v2h-1zM661 311h1v2h-1zM661 368h1v2h-1zM668 312h1v1h-1zM671 312h1v1h-1zM680 368h1v1h-1zM681 368h1v1h-1zM682 312h1v1h-1zM682 368h1v1h-1zM683 368h1v1h-1zM684 311h1v2h-1zM686 368h1v1h-1zM687 312h1v1h-1zM687 368h1v1h-1zM689 368h1v1h-1zM693 368h1v2h-1zM694 368h1v1h-1zM700 368h1v2h-1zM704 312h1v1h-1zM706 312h1v1h-1zM708 312h1v1h-1zM710 312h1v1h-1zM712 312h1v1h-1zM715 368h1v2h-1zM722 311h1v2h-1zM723 311h1v2h-1zM732 368h1v1h-1zM733 311h1v2h-1zM736 311h1v2h-1zM738 368h1v1h-1zM739 368h1v1h-1zM746 368h1v1h-1zM747 312h1v1h-1zM748 312h1v1h-1zM751 368h1v2h-1zM753 311h1v2h-1zM754 368h1v1h-1zM755 312h1v1h-1zM756 368h1v1h-1zM759 312h1v1h-1zM761 368h1v1h-1zM764 312h1v1h-1zM768 312h1v1h-1z" fill="#10E010" opacity="0.7"/>
<rect x="396" y="215" width="1" height="48" fill="#D8D060"/>
<rect x="396" y="313" width="1" height="55" fill="#A0F0A0"/>
<path d="M25 313V341M30 313V341M64 313V330M69 313V333M108 313V322M113 313V322M157 313V333M162 313V325M196 313V341M201 313V333M235 313V348M240 313V345M274 313V342M279 313V344M313 313V330M318 313V335M352 313V319M357 313V322M362 313V323M367 313V316M406 313V332M411 313V329M445 313V343M450 313V338M484 313V350M489 313V350M523 313V337M528 313V342M562 313V328M567 313V331M606 313V317M611 313V321M616 313V319M655 313V331M660 313V329M694 313V342M699 313V340M733 313V350M738 313V350" stroke="#1E5A1E" stroke-width="1" transform="translate(0.5 0)"/>
<rect x="21" y="157" width="750" height="1" fill="#9C7C9C"/>
<path d="M209.5 17V215M251.5 17V215" stroke="#2C102C" stroke-width="1"/>
<path d="M209.5 18V22M209.5 26V30M209.5 34V38M209.5 42V46M209.5 50V54M209.5 58V62M209.5 66V70M209.5 74V78M209.5 82V86M209.5 90V94M209.5 98V102M209.5 106V110M209.5 114V118M209.5 122V126M209.5 130V134M209.5 138V142M209.5 146V150M209.5 154V158M209.5 162V166M209.5 170V174M209.5 178V182M209.5 186V190M209.5 194V198M209.5 202V206M209.5 210V214M251.5 18V22M251.5 26V30M251.5 34V38M251.5 42V46M251.5 50V54M251.5 58V62M251.5 66V70M251.5 74V78M251.5 82V86M251.5 90V94M251.5 98V102M251.5 106V110M251.5 114V118M251.5 122V126M251.5 130V134M251.5 138V142M251.5 146V150M251.5 154V158M251.5 162V166M251.5 170V174M251.5 178V182M251.5 186V190M251.5 194V198M251.5 202V206M251.5 210V214" stroke="#9A5AA4" stroke-width="1"/>
<path d="M209.5 263V313M251.5 263V313" stroke="#2C102C" stroke-width="1"/>
<path d="M209.5 266V270M209.5 274V278M209.5 282V286M209.5 290V294M209.5 298V302M209.5 306V310M251.5 266V270M251.5 274V278M251.5 282V286M251.5 290V294M251.5 298V302M251.5 306V310" stroke="#9A5AA4" stroke-width="1"/>
<path d="M209.5 368V418M251.5 368V418" stroke="#2C102C" stroke-width="1"/>
<path d="M209.5 370V374M209.5 378V382M209.5 386V390M209.5 394V398M209.5 402V406M209.5 410V414M251.5 370V374M251.5 378V382M251.5 386V390M251.5 394V398M251.5 402V406M251.5 410V414" stroke="#9A5AA4" stroke-width="1"/>
<path d="M209.5 218V222M209.5 226V230M209.5 234V238M209.5 242V246M209.5 250V254M209.5 258V262M251.5 218V222M251.5 226V230M251.5 234V238M251.5 242V246M251.5 250V254M251.5 258V262" stroke="#4A3A18" stroke-width="1"/>
<path d="M209.5 314V318M209.5 322V326M209.5 330V334M209.5 338V342M209.5 346V350M209.5 354V358M209.5 362V366M251.5 314V318M251.5 322V326M251.5 330V334M251.5 338V342M251.5 346V350M251.5 354V358M251.5 362V366" stroke="#245A24" stroke-width="1"/>
<path d="M202.5 157V150.5H216.5V157" fill="none" stroke="#A050A8" stroke-width="1"/>
<circle cx="251.5" cy="166" r="6.5" fill="none" stroke="#A050A8" stroke-width="1"/>
<path d="M21 159.0 L22 158.8 L23 159.3 L24 158.9 L25 159.3 L26 159.2 L27 159.0 L28 159.4 L29 159.2 L30 159.7 L31 159.6 L32 159.8 L33 160.1 L34 160.3 L35 159.6 L36 159.4 L37 159.5 L38 159.6 L39 159.2 L40 159.0 L41 159.5 L42 158.8 L43 159.5 L44 159.0 L45 158.9 L46 158.9 L47 159.1 L48 159.6 L49 159.1 L50 159.4 L51 159.5 L52 159.2 L53 159.2 L54 158.6 L55 158.4 L56 158.3 L57 158.7 L58 158.5 L59 158.5 L60 158.9 L61 159.0 L62 159.0 L63 159.5 L64 159.4 L65 159.1 L66 159.4 L67 159.4 L68 159.8 L69 159.7 L70 159.3 L71 160.0 L72 159.4 L73 159.7 L74 160.0 L75 159.6 L76 159.7 L77 159.1 L78 159.2 L79 158.9 L80 158.5 L81 158.6 L82 158.2 L83 158.6 L84 158.6 L85 158.7 L86 158.7 L87 159.0 L88 159.1 L89 158.6 L90 158.7 L91 158.1 L92 158.5 L93 158.4 L94 158.8 L95 159.0 L96 158.9 L97 159.4 L98 159.9 L99 159.5 L100 159.8 L101 159.6 L102 159.4 L103 159.3 L104 159.9 L105 159.3 L106 159.3 L107 159.2 L108 159.2 L109 158.2 L110 158.2 L111 158.2 L112 158.6 L113 159.0 L114 159.5 L115 159.6 L116 160.1 L117 160.1 L118 160.6 L119 160.6 L120 160.0 L121 160.0 L122 160.0 L123 160.0 L124 160.2 L125 160.1 L126 159.7 L127 159.3 L128 159.5 L129 159.4 L130 159.6 L131 159.9 L132 159.6 L133 159.5 L134 159.6 L135 159.6 L136 159.0 L137 159.5 L138 159.2 L139 159.0 L140 158.8 L141 158.4 L142 158.3 L143 158.1 L144 158.4 L145 157.9 L146 157.8 L147 157.9 L148 157.9 L149 158.3 L150 158.3 L151 158.6 L152 158.9 L153 158.9 L154 159.1 L155 158.6 L156 159.0 L157 158.6 L158 158.0 L159 158.0 L160 158.1 L161 158.2 L162 158.1 L163 158.7 L164 158.9 L165 158.5 L166 158.5 L167 158.2 L168 158.3 L169 158.5 L170 158.4 L171 158.9 L172 158.3 L173 158.1 L174 158.8 L175 158.3 L176 157.9 L177 158.2 L178 157.9 L179 158.4 L180 159.0 L181 159.2 L182 159.2 L183 158.9 L184 159.0 L185 158.8 L186 159.3 L187 159.1 L188 159.3 L189 158.9 L190 158.9 L191 159.5 L192 159.9 L193 160.0 L194 160.1 L195 160.2 L196 160.1 L197 159.6 L198 159.6 L199 159.3 L200 158.9 L201 158.9 L202 159.1 L203 159.1 L204 159.5 L205 159.8 L206 159.4 L207 159.9 L208 159.9 L209 159.8 L210 159.2 L211 159.1 L212 159.0 L213 159.0 L214 159.0 L215 159.4 L216 159.7 L217 159.7 L218 159.5 L219 159.7 L220 159.8 L221 159.1 L222 159.5 L223 159.5 L224 159.4 L225 159.3 L226 159.1 L227 158.8 L228 159.1 L229 158.7 L230 159.0 L231 159.1 L232 158.7 L233 159.0 L234 159.9 L235 160.1 L236 159.9 L237 160.0 L238 160.0 L239 160.6 L240 160.5 L241 160.0 L242 160.6 L243 160.7 L244 160.4 L245 160.1 L246 160.2 L247 159.7 L248 159.6 L249 160.3 L250 160.0 L251 159.9 L252 160.1 L253 159.7 L254 160.0 L255 159.9 L256 159.4 L257 159.2 L258 159.1 L259 158.8 L260 158.9 L261 158.6 L262 158.7 L263 158.5 L264 159.0 L265 158.5 L266 158.6 L267 158.7 L268 158.9 L269 158.6 L270 159.0 L271 158.7 L272 158.8 L273 158.8 L274 158.3 L275 158.6 L276 158.2 L277 158.0 L278 158.5 L279 158.0 L280 158.3 L281 158.8 L282 159.1 L283 159.3 L284 159.7 L285 159.8 L286 160.0 L287 159.3 L288 159.4 L289 159.0 L290 158.9 L291 159.2 L292 159.1 L293 159.3 L294 159.7 L295 160.0 L296 159.9 L297 160.1 L298 159.9 L299 159.7 L300 159.6 L301 159.2 L302 159.0 L303 158.9 L304 159.4 L305 159.4 L306 159.9 L307 160.2 L308 159.9 L309 160.3 L310 160.5 L311 160.4 L312 159.8 L313 159.7 L314 159.9 L315 159.6 L316 159.6 L317 159.2 L318 159.2 L319 158.8 L320 158.5 L321 157.8 L322 158.3 L323 158.3 L324 158.0 L325 158.8 L326 158.9 L327 158.3 L328 159.0 L329 158.9 L330 159.3 L331 160.1 L332 160.3 L333 159.8 L334 160.0 L335 159.9 L336 159.5 L337 159.1 L338 159.1 L339 159.3 L340 158.8 L341 159.5 L342 159.6 L343 159.6 L344 160.0 L345 160.4 L346 160.2 L347 159.6 L348 160.0 L349 159.5 L350 159.4 L351 158.7 L352 158.7 L353 158.4 L354 158.8 L355 158.3 L356 158.0 L357 158.2 L358 158.7 L359 158.8 L360 158.7 L361 158.9 L362 159.7 L363 159.5 L364 159.7 L365 159.2 L366 159.3 L367 159.9 L368 159.7 L369 159.5 L370 160.1 L371 159.6 L372 159.5 L373 158.6 L374 159.1 L375 158.3 L376 159.0 L377 158.6 L378 158.4 L379 158.4 L380 158.7 L381 158.1 L382 158.0 L383 158.4 L384 158.4 L385 158.4 L386 158.5 L387 158.5 L388 158.7 L389 159.0 L390 159.4 L391 160.1 L392 160.0 L393 160.2 L394 159.9 L395 160.0 L396 159.6 L397 159.7 L398 159.4 L399 160.0 L400 159.7 L401 159.2 L402 159.0 L403 159.1 L404 158.1 L405 158.6 L406 158.3 L407 158.4 L408 158.8 L409 158.5 L410 158.6 L411 158.8 L412 159.0 L413 158.4 L414 158.7 L415 158.6 L416 158.5 L417 158.2 L418 158.2 L419 157.9 L420 158.0 L421 157.9 L422 158.4 L423 158.0 L424 158.1 L425 158.3 L426 159.3 L427 159.7 L428 159.9 L429 159.7 L430 159.6 L431 159.3 L432 159.1 L433 158.6 L434 158.5 L435 158.3 L436 158.9 L437 159.1 L438 158.9 L439 158.9 L440 159.6 L441 159.2 L442 159.2 L443 158.9 L444 159.1 L445 159.1 L446 159.1 L447 158.8 L448 159.1 L449 158.5 L450 158.6 L451 158.3 L452 158.5 L453 158.2 L454 158.2 L455 158.7 L456 158.9 L457 159.5 L458 159.7 L459 159.9 L460 159.7 L461 159.6 L462 159.4 L463 158.6 L464 158.3 L465 158.8 L466 158.2 L467 158.8 L468 159.1 L469 158.9 L470 159.7 L471 159.8 L472 159.5 L473 159.4 L474 159.2 L475 158.4 L476 158.5 L477 158.4 L478 158.7 L479 158.8 L480 159.0 L481 158.9 L482 159.3 L483 159.2 L484 159.1 L485 158.7 L486 158.4 L487 158.4 L488 158.5 L489 158.3 L490 158.8 L491 158.6 L492 158.7 L493 158.8 L494 158.8 L495 158.7 L496 158.4 L497 159.3 L498 159.7 L499 159.9 L500 160.2 L501 160.4 L502 159.9 L503 160.3 L504 159.9 L505 159.6 L506 159.7 L507 160.1 L508 159.6 L509 159.8 L510 159.7 L511 159.0 L512 158.7 L513 158.8 L514 159.0 L515 159.3 L516 159.5 L517 159.8 L518 159.6 L519 159.8 L520 159.8 L521 159.9 L522 159.1 L523 159.0 L524 158.3 L525 158.2 L526 158.4 L527 158.8 L528 158.9 L529 159.0 L530 158.8 L531 159.0 L532 159.0 L533 159.2 L534 159.2 L535 160.0 L536 159.7 L537 160.4 L538 160.3 L539 159.5 L540 159.7 L541 159.9 L542 159.9 L543 159.5 L544 159.2 L545 159.0 L546 159.3 L547 158.4 L548 158.5 L549 158.0 L550 158.5 L551 159.2 L552 159.0 L553 160.0 L554 160.2 L555 160.6 L556 160.3 L557 159.6 L558 159.7 L559 159.0 L560 158.3 L561 158.2 L562 158.6 L563 158.6 L564 158.5 L565 158.4 L566 158.5 L567 158.5 L568 159.0 L569 158.6 L570 159.4 L571 159.8 L572 159.4 L573 160.1 L574 159.9 L575 159.9 L576 159.1 L577 159.0 L578 158.8 L579 159.2 L580 158.9 L581 158.7 L582 158.7 L583 158.6 L584 158.4 L585 158.4 L586 159.0 L587 158.5 L588 158.9 L589 158.2 L590 158.1 L591 158.3 L592 158.0 L593 158.2 L594 158.6 L595 158.6 L596 158.5 L597 158.4 L598 158.7 L599 158.9 L600 158.9 L601 159.3 L602 158.9 L603 159.6 L604 159.3 L605 159.4 L606 159.1 L607 158.7 L608 158.3 L609 159.0 L610 158.4 L611 158.8 L612 158.9 L613 159.1 L614 159.6 L615 159.8 L616 159.2 L617 159.4 L618 159.0 L619 159.1 L620 158.9 L621 158.7 L622 158.7 L623 158.7 L624 159.3 L625 159.0 L626 158.9 L627 159.4 L628 159.6 L629 159.3 L630 159.4 L631 159.7 L632 159.8 L633 160.1 L634 159.8 L635 159.7 L636 159.5 L637 159.5 L638 159.5 L639 159.4 L640 159.1 L641 159.1 L642 159.3 L643 159.2 L644 159.2 L645 159.0 L646 159.2 L647 159.9 L648 159.4 L649 159.8 L650 160.1 L651 160.3 L652 159.7 L653 159.4 L654 159.1 L655 158.8 L656 158.6 L657 158.9 L658 158.8 L659 158.8 L660 158.1 L661 158.1 L662 158.6 L663 158.8 L664 158.5 L665 158.9 L666 158.9 L667 159.6 L668 160.3 L669 160.4 L670 160.4 L671 160.4 L672 159.8 L673 159.6 L674 159.6 L675 159.9 L676 160.0 L677 159.9 L678 159.5 L679 159.1 L680 158.9 L681 158.6 L682 158.7 L683 158.2 L684 158.8 L685 158.3 L686 158.9 L687 158.6 L688 158.4 L689 158.5 L690 158.9 L691 159.5 L692 159.8 L693 159.4 L694 159.4 L695 159.9 L696 160.0 L697 160.0 L698 159.9 L699 160.2 L700 159.7 L701 159.6 L702 159.3 L703 159.3 L704 158.8 L705 158.8 L706 158.6 L707 158.7 L708 159.2 L709 160.1 L710 160.2 L711 160.0 L712 159.8 L713 160.2 L714 160.3 L715 160.0 L716 159.9 L717 160.2 L718 160.3 L719 159.7 L720 159.4 L721 159.5 L722 159.4 L723 159.6 L724 159.2 L725 159.6 L726 159.4 L727 159.1 L728 158.8 L729 159.4 L730 158.8 L731 159.1 L732 158.5 L733 158.3 L734 158.6 L735 158.2 L736 158.7 L737 158.3 L738 158.0 L739 158.0 L740 158.1 L741 158.3 L742 158.7 L743 158.4 L744 159.1 L745 159.5 L746 160.5 L747 159.9 L748 159.8 L749 159.5 L750 159.3 L751 159.3 L752 159.0 L753 158.8 L754 159.1 L755 159.2 L756 159.0 L757 159.1 L758 159.9 L759 159.8 L760 159.2 L761 159.5 L762 159.1 L763 158.8 L764 158.6 L765 158.4 L766 158.4 L767 158.8 L768 159.2 L769 160.0 L770 159.5 L771 160.3 L771 165.0 L770 165.7 L769 165.3 L768 165.2 L767 165.4 L766 165.2 L765 165.0 L764 164.9 L763 165.1 L762 164.5 L761 165.3 L760 165.2 L759 165.3 L758 165.4 L757 165.2 L756 165.5 L755 165.2 L754 165.6 L753 165.4 L752 165.5 L751 165.6 L750 165.9 L749 166.1 L748 165.8 L747 166.0 L746 165.8 L745 165.9 L744 165.5 L743 166.0 L742 166.0 L741 166.0 L740 165.8 L739 165.7 L738 165.4 L737 165.5 L736 164.8 L735 165.2 L734 165.3 L733 164.6 L732 164.7 L731 164.9 L730 164.4 L729 164.3 L728 164.2 L727 164.4 L726 164.8 L725 165.2 L724 164.6 L723 164.8 L722 165.4 L721 165.6 L720 165.1 L719 165.7 L718 165.9 L717 166.1 L716 165.6 L715 166.3 L714 166.4 L713 166.0 L712 166.2 L711 166.2 L710 166.0 L709 166.1 L708 165.9 L707 165.9 L706 165.9 L705 166.1 L704 165.4 L703 165.5 L702 165.5 L701 165.3 L700 165.4 L699 165.3 L698 165.6 L697 165.0 L696 165.2 L695 164.4 L694 164.6 L693 164.4 L692 164.5 L691 164.8 L690 164.8 L689 164.6 L688 164.4 L687 164.9 L686 164.3 L685 164.6 L684 164.6 L683 164.8 L682 165.0 L681 165.0 L680 164.6 L679 164.7 L678 164.8 L677 165.2 L676 164.7 L675 165.0 L674 165.4 L673 165.2 L672 164.8 L671 164.9 L670 165.1 L669 165.5 L668 165.4 L667 165.5 L666 165.3 L665 165.7 L664 165.5 L663 165.2 L662 165.3 L661 165.6 L660 164.8 L659 165.2 L658 164.8 L657 165.1 L656 164.6 L655 165.1 L654 164.6 L653 164.6 L652 164.8 L651 164.6 L650 164.6 L649 165.0 L648 165.1 L647 165.5 L646 165.4 L645 165.9 L644 166.3 L643 166.2 L642 165.6 L641 165.9 L640 165.4 L639 166.1 L638 165.7 L637 165.6 L636 165.9 L635 165.7 L634 165.1 L633 165.5 L632 165.1 L631 164.8 L630 164.9 L629 164.8 L628 164.8 L627 164.7 L626 165.1 L625 165.2 L624 165.3 L623 165.0 L622 164.8 L621 165.4 L620 165.3 L619 165.6 L618 165.9 L617 166.1 L616 166.3 L615 166.1 L614 166.0 L613 165.8 L612 165.4 L611 164.8 L610 164.8 L609 165.0 L608 164.9 L607 164.9 L606 165.6 L605 165.7 L604 165.7 L603 166.0 L602 165.7 L601 166.0 L600 166.0 L599 165.7 L598 165.7 L597 165.6 L596 165.2 L595 164.9 L594 165.2 L593 165.2 L592 165.3 L591 165.8 L590 165.6 L589 165.9 L588 166.2 L587 166.2 L586 166.3 L585 165.6 L584 165.2 L583 165.8 L582 165.0 L581 165.4 L580 165.6 L579 165.0 L578 165.0 L577 164.8 L576 165.0 L575 164.8 L574 164.7 L573 164.7 L572 164.7 L571 165.2 L570 165.0 L569 164.7 L568 164.6 L567 164.6 L566 165.2 L565 164.9 L564 164.7 L563 165.1 L562 165.4 L561 165.2 L560 165.0 L559 165.4 L558 165.2 L557 165.3 L556 164.6 L555 164.6 L554 164.5 L553 164.7 L552 164.8 L551 165.0 L550 165.0 L549 165.1 L548 165.1 L547 165.8 L546 165.4 L545 165.5 L544 165.8 L543 165.1 L542 165.0 L541 164.8 L540 165.4 L539 164.7 L538 165.4 L537 164.9 L536 164.9 L535 164.9 L534 165.1 L533 165.2 L532 165.1 L531 165.2 L530 164.5 L529 164.9 L528 164.4 L527 164.6 L526 164.7 L525 164.3 L524 164.4 L523 165.1 L522 164.8 L521 165.5 L520 165.3 L519 165.6 L518 165.4 L517 165.8 L516 165.5 L515 165.3 L514 164.7 L513 165.3 L512 165.0 L511 164.5 L510 164.4 L509 164.6 L508 165.3 L507 164.8 L506 165.6 L505 165.1 L504 165.4 L503 165.5 L502 165.1 L501 165.3 L500 164.9 L499 164.7 L498 164.3 L497 164.8 L496 165.0 L495 164.9 L494 165.5 L493 165.2 L492 165.4 L491 165.9 L490 165.6 L489 165.5 L488 165.2 L487 165.4 L486 165.2 L485 165.0 L484 165.4 L483 164.8 L482 164.8 L481 165.0 L480 165.3 L479 165.4 L478 165.3 L477 165.4 L476 165.5 L475 164.8 L474 164.8 L473 164.8 L472 164.7 L471 165.3 L470 165.2 L469 165.1 L468 164.5 L467 165.3 L466 165.3 L465 165.4 L464 165.1 L463 165.4 L462 165.0 L461 165.5 L460 165.5 L459 165.4 L458 165.4 L457 164.8 L456 164.8 L455 164.9 L454 165.1 L453 165.6 L452 165.1 L451 165.2 L450 165.4 L449 166.1 L448 165.5 L447 165.9 L446 165.3 L445 165.2 L444 165.1 L443 165.0 L442 164.6 L441 164.8 L440 164.7 L439 165.0 L438 164.8 L437 165.4 L436 165.3 L435 165.4 L434 165.4 L433 165.7 L432 165.2 L431 165.4 L430 165.9 L429 165.6 L428 166.0 L427 166.2 L426 166.0 L425 165.5 L424 165.4 L423 165.1 L422 165.7 L421 165.1 L420 165.7 L419 165.4 L418 165.1 L417 165.2 L416 165.4 L415 165.1 L414 165.1 L413 164.9 L412 165.2 L411 165.3 L410 165.2 L409 165.2 L408 164.8 L407 164.5 L406 164.7 L405 164.6 L404 164.6 L403 164.8 L402 165.0 L401 164.7 L400 164.9 L399 165.0 L398 164.3 L397 165.0 L396 165.3 L395 165.5 L394 165.0 L393 165.4 L392 165.4 L391 165.3 L390 165.8 L389 165.7 L388 165.6 L387 165.7 L386 165.4 L385 165.3 L384 165.9 L383 165.5 L382 165.0 L381 165.5 L380 164.8 L379 164.9 L378 165.0 L377 165.1 L376 164.7 L375 165.4 L374 164.9 L373 165.3 L372 165.4 L371 165.0 L370 165.2 L369 165.0 L368 165.3 L367 165.5 L366 165.1 L365 165.3 L364 165.5 L363 165.8 L362 166.0 L361 165.9 L360 165.5 L359 165.7 L358 165.8 L357 166.4 L356 165.8 L355 166.0 L354 166.2 L353 165.8 L352 166.1 L351 166.1 L350 165.8 L349 165.9 L348 165.7 L347 165.8 L346 165.4 L345 165.4 L344 165.8 L343 165.4 L342 165.3 L341 165.8 L340 165.2 L339 164.9 L338 164.9 L337 164.3 L336 164.2 L335 164.2 L334 164.5 L333 164.9 L332 165.0 L331 165.4 L330 165.2 L329 164.9 L328 165.4 L327 164.8 L326 165.4 L325 164.9 L324 165.2 L323 165.5 L322 165.2 L321 165.3 L320 165.7 L319 165.1 L318 165.6 L317 165.3 L316 165.5 L315 165.8 L314 165.1 L313 165.7 L312 165.4 L311 165.3 L310 165.5 L309 165.1 L308 165.3 L307 165.2 L306 164.9 L305 165.4 L304 164.9 L303 165.5 L302 165.3 L301 165.5 L300 164.9 L299 165.0 L298 165.0 L297 165.4 L296 165.7 L295 165.6 L294 165.6 L293 166.1 L292 165.6 L291 165.1 L290 165.4 L289 164.8 L288 165.1 L287 164.5 L286 165.0 L285 164.6 L284 164.4 L283 165.0 L282 164.8 L281 164.3 L280 164.9 L279 165.0 L278 164.8 L277 165.4 L276 165.0 L275 165.7 L274 165.7 L273 166.0 L272 165.9 L271 165.2 L270 165.6 L269 165.0 L268 164.9 L267 164.4 L266 164.8 L265 165.0 L264 165.1 L263 164.7 L262 165.3 L261 165.0 L260 165.5 L259 165.4 L258 165.1 L257 165.3 L256 165.0 L255 164.9 L254 165.1 L253 164.8 L252 165.0 L251 165.2 L250 165.2 L249 164.7 L248 164.8 L247 164.9 L246 164.3 L245 164.7 L244 164.7 L243 164.9 L242 164.8 L241 165.1 L240 165.0 L239 165.0 L238 165.3 L237 165.2 L236 165.2 L235 164.7 L234 165.1 L233 164.4 L232 164.9 L231 164.7 L230 164.4 L229 165.2 L228 165.4 L227 165.3 L226 165.5 L225 165.9 L224 166.0 L223 165.9 L222 165.8 L221 165.8 L220 166.3 L219 166.3 L218 166.0 L217 165.9 L216 166.2 L215 165.5 L214 165.8 L213 165.3 L212 165.2 L211 164.6 L210 165.0 L209 164.3 L208 164.8 L207 165.3 L206 165.4 L205 164.9 L204 165.0 L203 165.7 L202 165.6 L201 165.4 L200 165.3 L199 166.1 L198 165.9 L197 165.8 L196 165.7 L195 165.9 L194 165.6 L193 165.5 L192 164.8 L191 165.2 L190 164.8 L189 164.6 L188 164.2 L187 164.3 L186 164.5 L185 164.9 L184 164.5 L183 164.8 L182 164.5 L181 164.9 L180 164.4 L179 164.8 L178 165.5 L177 165.4 L176 165.7 L175 166.2 L174 166.1 L173 165.6 L172 165.5 L171 165.5 L170 165.1 L169 165.5 L168 165.0 L167 165.0 L166 165.1 L165 165.3 L164 164.8 L163 164.7 L162 165.2 L161 165.1 L160 165.0 L159 164.8 L158 164.9 L157 165.4 L156 165.7 L155 165.3 L154 165.4 L153 165.3 L152 165.6 L151 165.1 L150 164.6 L149 164.6 L148 164.8 L147 164.7 L146 164.5 L145 164.6 L144 164.8 L143 165.2 L142 165.4 L141 165.8 L140 165.9 L139 165.4 L138 165.9 L137 165.6 L136 164.9 L135 164.8 L134 164.9 L133 164.5 L132 165.0 L131 164.9 L130 165.5 L129 165.2 L128 165.4 L127 165.7 L126 165.6 L125 166.2 L124 166.0 L123 165.7 L122 165.2 L121 164.7 L120 165.2 L119 164.9 L118 165.0 L117 164.6 L116 164.9 L115 165.4 L114 165.0 L113 165.0 L112 165.3 L111 165.5 L110 164.8 L109 164.8 L108 164.7 L107 164.6 L106 164.9 L105 164.6 L104 164.8 L103 164.7 L102 165.3 L101 164.9 L100 165.5 L99 165.8 L98 165.8 L97 165.7 L96 165.6 L95 165.4 L94 165.2 L93 165.4 L92 165.6 L91 165.4 L90 165.1 L89 165.1 L88 165.2 L87 165.8 L86 165.8 L85 165.8 L84 165.3 L83 165.5 L82 165.1 L81 165.2 L80 165.3 L79 165.8 L78 165.4 L77 165.3 L76 165.8 L75 165.5 L74 165.5 L73 165.6 L72 165.8 L71 166.0 L70 166.1 L69 165.9 L68 165.9 L67 165.2 L66 165.6 L65 165.1 L64 164.9 L63 164.7 L62 164.9 L61 165.3 L60 165.4 L59 165.0 L58 164.9 L57 164.7 L56 165.5 L55 165.2 L54 165.3 L53 165.1 L52 164.3 L51 164.4 L50 164.4 L49 164.7 L48 164.3 L47 164.7 L46 165.0 L45 164.5 L44 164.6 L43 165.0 L42 164.9 L41 164.6 L40 165.2 L39 164.7 L38 164.9 L37 165.0 L36 165.7 L35 165.8 L34 165.5 L33 165.2 L32 165.9 L31 165.4 L30 165.3 L29 165.9 L28 165.5 L27 165.5 L26 165.1 L25 165.4 L24 165.6 L23 165.6 L22 165.2 L21 165.0Z" fill="#F01EF0"/>
<rect x="21" y="161" width="750" height="3" fill="#FF50FF" opacity="0.35"/>
<path d="M22 163h3v1h-3zM32 159h2v1h-2zM46 164h3v1h-3zM57 159h1v1h-1zM73 160h2v1h-2zM87 164h3v1h-3zM94 164h3v1h-3zM100 160h1v1h-1zM107 160h1v1h-1zM117 163h2v1h-2zM126 160h1v1h-1zM133 164h2v1h-2zM139 164h2v1h-2zM147 164h1v1h-1zM153 159h2v1h-2zM171 159h3v1h-3zM197 160h2v1h-2zM207 164h1v1h-1zM209 160h3v1h-3zM215 163h2v1h-2zM222 160h3v1h-3zM242 163h2v1h-2zM250 160h3v1h-3zM264 163h1v1h-1zM276 160h2v1h-2zM279 159h3v1h-3zM301 159h1v1h-1zM307 164h3v1h-3zM316 159h1v1h-1zM319 160h2v1h-2zM334 164h3v1h-3zM346 163h2v1h-2zM374 159h1v1h-1zM383 164h2v1h-2zM401 159h2v1h-2zM421 160h2v1h-2zM440 159h3v1h-3zM454 164h1v1h-1zM469 163h2v1h-2zM472 159h1v1h-1zM476 160h1v1h-1zM479 160h1v1h-1zM490 163h2v1h-2zM493 164h2v1h-2zM497 163h1v1h-1zM531 163h3v1h-3zM539 160h3v1h-3zM548 164h2v1h-2zM580 163h2v1h-2zM582 164h3v1h-3zM589 164h2v1h-2zM592 163h3v1h-3zM597 164h2v1h-2zM604 164h2v1h-2zM612 160h3v1h-3zM615 159h3v1h-3zM654 160h2v1h-2zM658 164h3v1h-3zM660 163h2v1h-2zM662 163h2v1h-2zM664 159h3v1h-3zM689 164h3v1h-3zM701 160h3v1h-3zM709 160h3v1h-3zM711 163h2v1h-2zM720 159h2v1h-2zM724 160h2v1h-2zM728 164h1v1h-1zM740 159h3v1h-3zM753 159h3v1h-3z" fill="#5A0A5A" opacity="0.8"/>
<rect x="21" y="165" width="750" height="1" fill="#8A6A8A" opacity="0.5"/>
<rect x="26.5" y="147.5" width="15" height="27" rx="7.5" ry="7.5" fill="#F05A14" stroke="#D84A10" stroke-width="1"/>
<text x="34" y="160.5" font-family="Liberation Sans" font-weight="bold" font-size="14.5" fill="#1A0800" text-anchor="middle">b</text>
<text transform="translate(34 171) scale(1 1.25)" x="0" y="0" font-family="Liberation Sans" font-weight="bold" font-size="14" fill="#1A0800" text-anchor="middle">a</text>
<path d="M92 17H102L97 22.5Z" fill="#F2A42A"/>
<path d="M91 24H103V35L97 38.5L91 35Z" fill="#F2A42A"/>
<rect x="92.5" y="25" width="9" height="2" fill="#140C00"/>
<rect x="96" y="25" width="2" height="11" fill="#140C00"/>
<path d="M0.5 255.5 H13 L19 262 L13 269.5 H0.5 Z" fill="#000" stroke="#F0F080" stroke-width="1.5"/>
<text x="7.5" y="267.0" font-family="Liberation Sans" font-weight="bold" font-size="14" fill="#F8F8A0" text-anchor="middle">1</text>
<path d="M0.5 308 H13 L19 316 L13 322 H0.5 Z" fill="#C020C0" stroke="#A010A8" stroke-width="1.5"/>
<text x="7.5" y="319.5" font-family="Liberation Sans" font-weight="bold" font-size="14" fill="#2A0A30" text-anchor="middle">3</text>
<path d="M0.5 363 H13 L19 369.5 L13 376 H0.5 Z" fill="#000" stroke="#20A020" stroke-width="1.5"/>
<text x="7.5" y="373.5" font-family="Liberation Sans" font-weight="bold" font-size="14" fill="#30C030" text-anchor="middle">4</text>
<rect x="469.5" y="41.5" width="301" height="58" rx="6" fill="#000" stroke="#D8D8E0" stroke-width="1"/>
<rect x="488.5" y="44.5" width="14" height="14" fill="none" stroke="#B040D0" stroke-width="1"/>
<circle cx="495.5" cy="71.5" r="7" fill="none" stroke="#B040D0" stroke-width="1"/>
<circle cx="647" cy="52" r="8" fill="#F05A14"/>
<circle cx="647" cy="71" r="8" fill="#F05A14"/>
<text x="647" y="56.8" font-family="Liberation Sans" font-weight="bold" font-size="15" fill="#1A0800" text-anchor="middle">a</text>
<text x="647" y="76" font-family="Liberation Sans" font-weight="bold" font-size="15" fill="#1A0800" text-anchor="middle">b</text>
<path d="M544.5 94L550 84.5L555.5 94Z M672 94L677.5 84.5L683 94Z" fill="none" stroke="#B040D0" stroke-width="1.6"/>
<rect x="20.5" y="420.5" width="321" height="38" rx="6" fill="#000" stroke="#D0D4F4" stroke-width="1"/>
<rect x="344.5" y="420.5" width="338" height="38" rx="6" fill="#000" stroke="#D0D4F4" stroke-width="1"/>
<rect x="686.5" y="420.5" width="110" height="38" rx="6" fill="#000" stroke="#D0D4F4" stroke-width="1"/>
<rect x="26" y="423" width="25" height="15.5" rx="7.75" fill="#F0F000"/>
<text x="38.5" y="436.5" font-family="Liberation Sans" font-size="16" fill="#000" stroke="#000" stroke-width="0.3" text-anchor="middle">1</text>
<rect x="26" y="441" width="25" height="15.5" rx="7.75" fill="#A020B8"/>
<text x="38.5" y="454.5" font-family="Liberation Sans" font-size="16" fill="#300838" stroke="#300838" stroke-width="0.3" text-anchor="middle">3</text>
<rect x="186" y="440.5" width="25.5" height="16.5" rx="8" fill="#20B020"/>
<text x="198.75" y="454.5" font-family="Liberation Sans" font-size="16" fill="#082008" stroke="#082008" stroke-width="0.3" text-anchor="middle">4</text>
<text x="304" y="450.3" font-family="Liberation Sans" font-size="9.5" fill="#30A030">B</text>
<text x="307.5" y="453.8" font-family="Liberation Sans" font-size="9.5" fill="#30A030" textLength="7" lengthAdjust="spacingAndGlyphs">W</text>
<rect x="349" y="442" width="12" height="13" rx="1.5" fill="#F0A020"/>
<rect x="351" y="443.5" width="8" height="2.5" fill="#1A1000"/>
<rect x="354" y="443.5" width="2.5" height="10" fill="#1A1000"/>
<rect x="616.5" y="423.5" width="24" height="15" rx="7.5" fill="#F0F000"/>
<text x="628.5" y="436.5" font-family="Liberation Sans" font-size="16" fill="#000" stroke="#000" stroke-width="0.3" text-anchor="middle">1</text>
<path d="M655 435H659.5L663.5 425.5H667.5" fill="none" stroke="#F4F4F4" stroke-width="2"/>
<text x="551.0" y="57" font-family="Liberation Sans" font-size="15.6" fill="#AC3CC8" stroke="#AC3CC8" stroke-width="0.3" textLength="64.0" lengthAdjust="spacing">298.0µs</text>
<text x="550.0" y="76" font-family="Liberation Sans" font-size="15.6" fill="#AC3CC8" stroke="#AC3CC8" stroke-width="0.3" textLength="65.0" lengthAdjust="spacing">412.0µs</text>
<text x="560.0" y="95" font-family="Liberation Sans" font-size="15.6" fill="#AC3CC8" stroke="#AC3CC8" stroke-width="0.3" textLength="62.0" lengthAdjust="spacing">114.0µs</text>
<text x="687.0" y="57" font-family="Liberation Sans" font-size="15.6" fill="#AC3CC8" stroke="#AC3CC8" stroke-width="0.3" textLength="58.0" lengthAdjust="spacing">4.060 A</text>
<text x="687.0" y="76" font-family="Liberation Sans" font-size="15.6" fill="#AC3CC8" stroke="#AC3CC8" stroke-width="0.3" textLength="58.0" lengthAdjust="spacing">3.860 A</text>
<text x="687.0" y="95" font-family="Liberation Sans" font-size="15.6" fill="#AC3CC8" stroke="#AC3CC8" stroke-width="0.3" textLength="71.0" lengthAdjust="spacing">200.0mA</text>
<text x="68.0" y="436" font-family="Liberation Sans" font-size="15.6" fill="#F2F27A" stroke="#F2F27A" stroke-width="0.3" textLength="50.0" lengthAdjust="spacing">5.00 V</text>
<text x="66.0" y="454" font-family="Liberation Sans" font-size="15.6" fill="#A030C0" stroke="#A030C0" stroke-width="0.3" textLength="53.0" lengthAdjust="spacing">1.20 A</text>
<text x="130.0" y="454" font-family="Liberation Sans" font-size="15.6" fill="#A030C0" stroke="#A030C0" stroke-width="0.3" textLength="13.0" lengthAdjust="spacingAndGlyphs">Ω</text>
<text x="228.0" y="454" font-family="Liberation Sans" font-size="15.6" fill="#30B030" stroke="#30B030" stroke-width="0.3" textLength="50.0" lengthAdjust="spacing">5.00 V</text>
<text x="350.0" y="436" font-family="Liberation Sans" font-size="15.6" fill="#F4F4F4" stroke="#F4F4F4" stroke-width="0.3" textLength="48.0" lengthAdjust="spacing">200µs</text>
<text x="368.0" y="454" font-family="Liberation Sans" font-size="15.6" fill="#F2AC50" stroke="#F2AC50" stroke-width="0.3" textLength="44.0" lengthAdjust="spacing">10.10</text>
<text x="418.0" y="454" font-family="Liberation Sans" font-size="15.6" fill="#F2AC50" stroke="#F2AC50" stroke-width="0.3" textLength="11.0" lengthAdjust="spacingAndGlyphs">%</text>
<text x="488.0" y="436" font-family="Liberation Sans" font-size="15.6" fill="#F4F4F4" stroke="#F4F4F4" stroke-width="0.3" textLength="49.0" lengthAdjust="spacing">5.00M</text>
<text x="488.0" y="454" font-family="Liberation Sans" font-size="15.6" fill="#F4F4F4" stroke="#F4F4F4" stroke-width="0.3" textLength="29.0" lengthAdjust="spacing">10k</text>
<text x="624.0" y="454" font-family="Liberation Sans" font-size="15.6" fill="#F4F4F4" stroke="#F4F4F4" stroke-width="0.3" textLength="49.0" lengthAdjust="spacing">2.70 V</text>
<text x="702.0" y="436" font-family="Liberation Sans" font-size="15.6" fill="#F4F4F4" stroke="#F4F4F4" stroke-width="0.3" textLength="7.0" lengthAdjust="spacingAndGlyphs">6</text>
<text x="717.0" y="436" font-family="Liberation Sans" font-size="15.6" fill="#F4F4F4" stroke="#F4F4F4" stroke-width="0.3" textLength="6.0" lengthAdjust="spacingAndGlyphs">1</text>
<text x="755.0" y="436" font-family="Liberation Sans" font-size="15.6" fill="#F4F4F4" stroke="#F4F4F4" stroke-width="0.3" textLength="36.0" lengthAdjust="spacing">2017</text>
<text x="692.0" y="454" font-family="Liberation Sans" font-size="15.6" fill="#F4F4F4" stroke="#F4F4F4" stroke-width="0.3" textLength="69.0" lengthAdjust="spacing">08:11:10</text>
<path d="M558 435.5L562.5 425" stroke="#F4F4F4" stroke-width="2"/>
<path d="M540.5 425L542.5 427.5 M540 435L542.5 431 M545.5 424L544 427.5 M544.5 427.5H553.5L552.5 429.5 M549 427.5V432Q547 436 543 438 M549.5 432.5Q551 436 555 438 M571.5 423.7L566.5 425 M566 427.5H572 M568.5 424.5V438.5 M568.5 428.5L566 434 M569 430L571.5 432 M575.5 423.5V432 M573.3 427.5L572.5 430 M579.5 427L581 429.5 M581 430.5Q579 436 572.5 438.3 M530.5 441V447 M530.5 444.5H537 M526.5 446.5V452M526.5 447.5H536.5V451.5H526.5 M524.3 456.3L526 453.5M529 453.5L530.3 456.3M532.8 453.5L534.3 456.3M536.5 453.5L538.3 456.3 M730.5 423.8V433Q730 436 728 438.2 M730.5 424H739V437.5H736.5 M731 428.5H738.5 M731 433H738.5" fill="none" stroke="#F4F4F4" stroke-width="1.3"/>
<rect x="600" y="449" width="200" height="31" fill="#FFFFFF" opacity="0.3"/>
<text x="616" y="471" font-family="Liberation Sans" font-size="21" fill="#4C5E8C" stroke="#4C5E8C" stroke-width="0.5" textLength="164" lengthAdjust="spacingAndGlyphs">www.cntronics.com</text>
</svg>
</body></html>
